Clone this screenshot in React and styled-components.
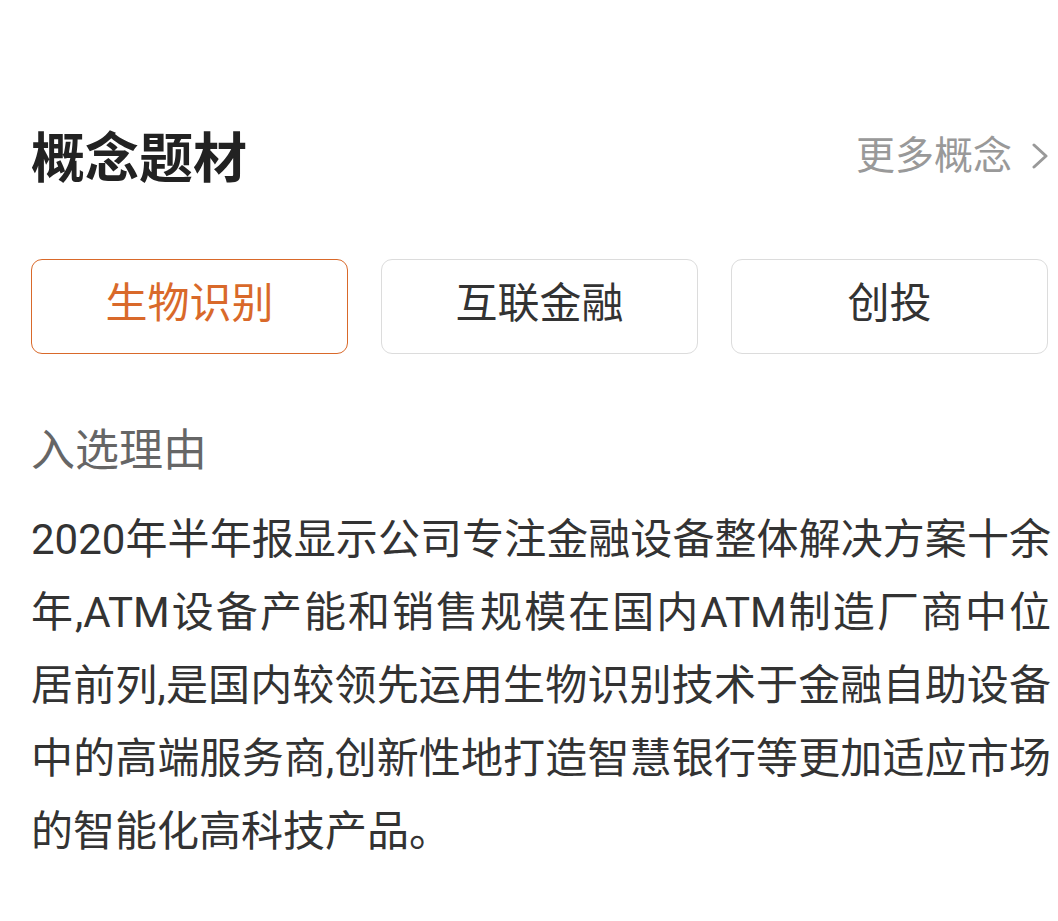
import React from "react";
import styled, { createGlobalStyle } from "styled-components";

const Global = createGlobalStyle`
  html, body { margin: 0; padding: 0; background: #ffffff; }
  body { font-family: Roboto, "Noto Sans CJK SC", sans-serif; }
`;

const Page = styled.div`
  width: 1058px;
  min-height: 921px;
  box-sizing: border-box;
  padding: 122px 10px 0 31px;
  background: #fff;
`;

const Header = styled.div`
  display: flex;
  align-items: center;
  justify-content: space-between;
  height: 76px;
`;

const Title = styled.h2`
  margin: 0;
  font-size: 54px;
  line-height: 76px;
  font-weight: 700;
  color: #222;
`;

const More = styled.a`
  display: flex;
  align-items: center;
  gap: 20px;
  font-size: 39px;
  line-height: 56px;
  color: #999;
  text-decoration: none;
  margin-top: -8px;
`;

const Tabs = styled.div`
  display: grid;
  grid-template-columns: repeat(3, 1fr);
  column-gap: 33px;
  margin-top: 61px;
`;

const Tab = styled.button`
  height: 95px;
  box-sizing: border-box;
  border-radius: 11px;
  border: 1.5px solid ${(p) => (p.$active ? "#d9692a" : "#dcdcdc")};
  background: #fff;
  color: ${(p) => (p.$active ? "#d9692a" : "#333")};
  font-family: Roboto, "Noto Sans CJK SC", sans-serif;
  font-size: 42px;
  line-height: 1;
  padding: 0 0 5px;
  display: flex;
  align-items: center;
  justify-content: center;
`;

const Label = styled.div`
  margin-top: 67px;
  font-size: 44px;
  line-height: 60px;
  color: #666;
`;

const Body = styled.p`
  margin: 22px -3px 0 0;
  font-size: 42px;
  line-height: 73px;
  color: #333;
  text-align: justify;
`;

const Chevron = () => (
  <svg width="16" height="26" viewBox="0 0 16 26" fill="none">
    <polyline points="2,2 14,13 2,24" stroke="#999" strokeWidth="3" strokeLinecap="round" strokeLinejoin="round" />
  </svg>
);

const tabs = ["生物识别", "互联金融", "创投"];

export default function App() {
  return (
    <>
      <Global />
      <Page>
        <Header>
          <Title>概念题材</Title>
          <More href="#">
            更多概念
            <Chevron />
          </More>
        </Header>
        <Tabs>
          {tabs.map((t, i) => (
            <Tab key={t} $active={i === 0}>
              {t}
            </Tab>
          ))}
        </Tabs>
        <Label>入选理由</Label>
        <Body>
          2020年半年报显示公司专注金融设备整体解决方案十余年,ATM设备产能和销售规模在国内ATM制造厂商中位居前列,是国内较领先运用生物识别技术于金融自助设备中的高端服务商,创新性地打造智慧银行等更加适应市场的智能化高科技产品。
        </Body>
      </Page>
    </>
  );
}
